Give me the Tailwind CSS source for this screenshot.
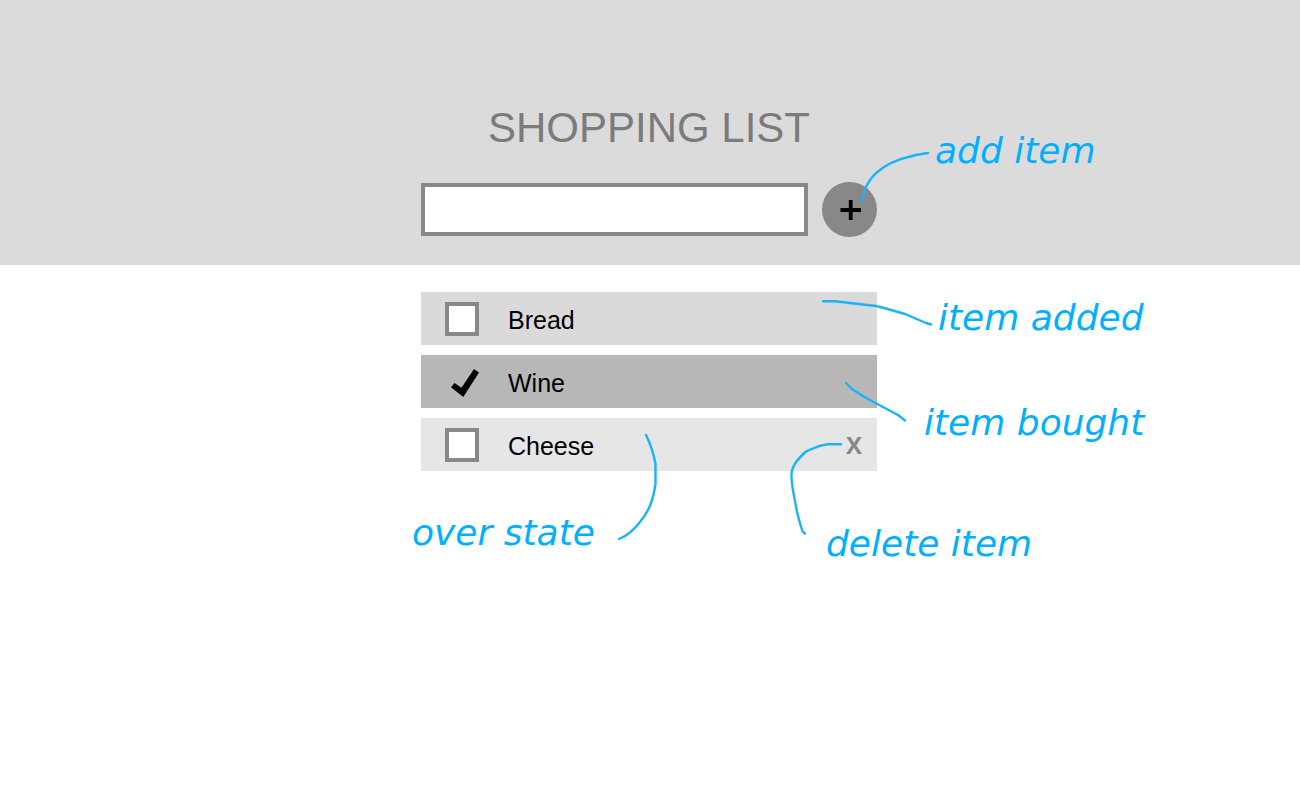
<!DOCTYPE html>
<html lang="en">
<head>
<meta charset="utf-8">
<meta name="viewport" content="width=device-width, initial-scale=1">
<title>Shopping List</title>
<script src="https://cdn.jsdelivr.net/npm/@tailwindcss/browser@4"></script>
</head>
<body class="bg-white font-['Liberation_Sans',Arial,sans-serif] text-black">
<div class="relative min-h-screen overflow-x-clip">
  <header class="bg-[#dbdbdb] pt-[104px] pb-7">
    <div class="mx-auto max-w-[458px] pr-0.5">
      <h1 class="text-center text-[42px] leading-12 text-[#7b7b7b]">SHOPPING LIST</h1>
      <form class="mt-[30px] flex items-center gap-[14px]">
        <input type="text" aria-label="New item" class="h-[53px] min-w-0 flex-1 border-4 border-[#888888] bg-white px-3 text-[25px] outline-none">
        <button type="button" aria-label="Add item" class="grid size-[55px] shrink-0 place-items-center rounded-full bg-[#888888]">
          <svg class="size-[22px]" viewBox="0 0 22 22" aria-hidden="true"><path d="M1.500 11H22M11.700 1V21" stroke="#000" stroke-width="3.8" fill="none"/></svg>
        </button>
      </form>
    </div>
  </header>

  <main class="mx-auto max-w-[458px] pt-[27px] pr-0.5">
    <ul class="flex flex-col gap-2.5">
      <li class="flex h-[53px] items-center bg-[#dadada] px-6">
        <input id="bread" type="checkbox" class="size-[34px] shrink-0 appearance-none border-4 border-[#888888] bg-white">
        <label for="bread" class="flex-1 pt-0.5 pl-[29px] text-[25px] leading-8">Bread</label>
      </li>
      <li class="flex h-[53px] items-center bg-[#b7b7b7] px-6">
        <span class="grid size-[34px] shrink-0">
          <input id="wine" type="checkbox" checked class="col-start-1 row-start-1 size-[34px] appearance-none">
          <svg class="pointer-events-none col-start-1 row-start-1 size-[34px]" viewBox="0 0 34 34" aria-hidden="true"><path d="M6 22.3 9.5 18 16.5 22.7 29 4 34 7.6 18.3 32Z"/></svg>
        </span>
        <label for="wine" class="flex-1 pt-0.5 pl-[29px] text-[25px] leading-8">Wine</label>
      </li>
      <li class="flex h-[53px] items-center bg-[#e6e6e6] pr-[15px] pl-6">
        <input id="cheese" type="checkbox" class="size-[34px] shrink-0 appearance-none border-4 border-[#888888] bg-white">
        <label for="cheese" class="flex-1 pt-0.5 pl-[29px] text-[25px] leading-8">Cheese</label>
        <button type="button" aria-label="Delete Cheese" class="font-['Open_Sans',sans-serif] text-2xl font-bold text-[#888888]">X</button>
      </li>
    </ul>
  </main>

  <!-- Annotations lie over the mockup and stay centred with it -->
  <div class="pointer-events-none absolute top-0 left-1/2 h-[600px] w-[1300px] -translate-x-1/2 font-['DejaVu_Sans',sans-serif] text-4xl/10 font-extralight whitespace-nowrap text-[#00b0ff] italic">
    <svg class="absolute inset-0 size-full" viewBox="0 0 1300 600" fill="none" stroke="#18b3fb" stroke-width="2.4" stroke-linecap="round" stroke-linejoin="round" aria-hidden="true">
      <path d="M928 153C910 155 891 161 880 170C869 178 864 188 862 201"/>
      <path d="M823 301.300H835L850 303L876 306L884 308L905 314L926 323L931 324.500"/>
      <path d="M846 383L852 389L866 398L898 415L905 420.500"/>
      <path d="M646 435C649 441 653 450 655.500 464V484C653 501 649 511 640 522C633 531 627 536 619 539"/>
      <path d="M841 444.300H828C820 445 814 448 806 451.500C799 458 792 465 791.500 474C791 486 795 499 797 512C799 520 801 528 803 532L805 533.500"/>
    </svg>
    <p class="absolute top-[131px] left-[935px]">add item</p>
    <p class="absolute top-[298px] left-[938px]">item added</p>
    <p class="absolute top-[403px] left-[924px]">item bought</p>
    <p class="absolute top-[513px] left-[412px]">over state</p>
    <p class="absolute top-[524px] left-[826px]">delete item</p>
  </div>
</div>
</body>
</html>
